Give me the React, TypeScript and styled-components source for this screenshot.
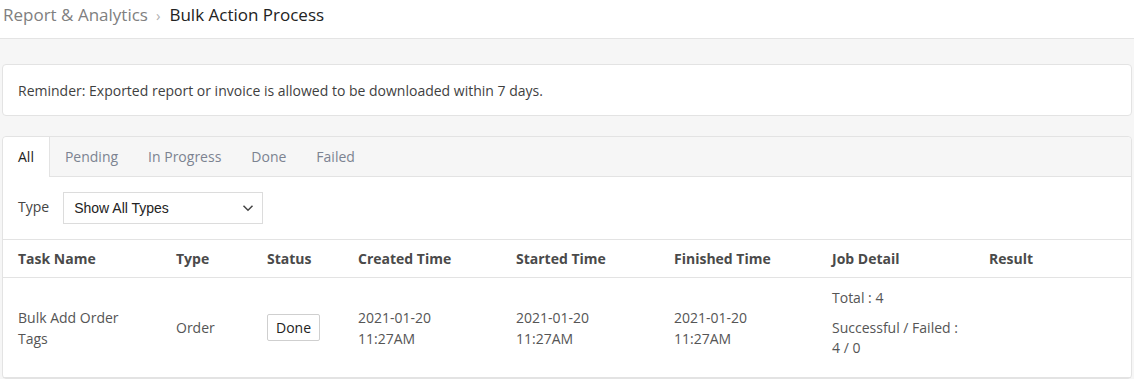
import styled, { createGlobalStyle } from 'styled-components'

const GlobalStyle = createGlobalStyle`
  html, body { margin: 0; padding: 0; background: #f6f6f6; }
  body { font-family: "Open Sans", "Liberation Sans", sans-serif; color: #555; }
  * { box-sizing: border-box; }
`

const Header = styled.header`
  height: 39px; background: #fff; border-bottom: 1px solid #e4e4e4;
  display: flex; align-items: center; padding: 0 3px 9px;
  font-size: 17px;
`

const Crumb = styled.span<{ current?: boolean }>`
  color: ${p => (p.current ? '#222' : '#808080')};
`

const Sep = styled.span`
  color: #b0b0b0; font-size: 15px; margin: 0 9px 0 8px;
`

const Body = styled.main`
  padding: 25px 2px 0;
  display: flex; flex-direction: column; gap: 20px;
`

const Panel = styled.section`
  background: #fff; border: 1px solid #e3e3e3; border-radius: 4px;
`

const Reminder = styled(Panel)`
  height: 52px; display: flex; align-items: center;
  padding: 0 15px; font-size: 14px; color: #3f3f3f;
`

const Tabs = styled.nav`
  display: flex; height: 40px; background: #f6f6f6;
  border-bottom: 1px solid #e3e3e3; border-radius: 4px 4px 0 0;
`

const Tab = styled.div<{ active?: boolean }>`
  display: flex; align-items: center; padding: 0 15px 1px;
  font-size: 14px; margin-bottom: -1px;
  color: ${p => (p.active ? '#222' : '#7c8391')};
  background: ${p => (p.active ? '#fff' : 'transparent')};
  border-right: ${p => (p.active ? '1px solid #e3e3e3' : 'none')};
  border-radius: ${p => (p.active ? '4px 0 0 0' : '0')};
`

const Filter = styled.div`
  display: flex; align-items: center; gap: 14px;
  padding: 15px;
  border-bottom: 1px solid #e3e3e3;
  font-size: 14px; color: #444;
`

const FilterLabel = styled.span`
  margin-top: -3px;
`

const Select = styled.div`
  width: 200px; height: 32px; border: 1px solid #dcdcdc;
  display: flex; align-items: center; justify-content: space-between;
  padding: 0 8px 0 10px;
  font-family: "Liberation Sans", Arial, sans-serif; font-size: 14px; color: #222;
`

const Table = styled.div`
  display: grid;
  grid-template-columns: 158px 91px 91px 158px 158px 158px 157px 1fr;
  padding-left: 15px;
`

const HeadCell = styled.div`
  height: 38px; display: flex; align-items: center;
  font-weight: 700; font-size: 14px; color: #4a4a4a;
  border-bottom: 1px solid #e3e3e3;
  margin-left: -15px; padding-left: 15px;
`

const Cell = styled.div`
  height: 100px; display: flex; flex-direction: column; justify-content: center;
  font-size: 14px; line-height: 21px; color: #555;
  border-bottom: 1px solid #e3e3e3;
  margin-left: -15px; padding-left: 15px; padding-right: 12px;
`

const StatusTag = styled.span`
  align-self: flex-start; border: 1px solid #cfcfcf; border-radius: 2px;
  padding: 2px 8px; line-height: 21px; color: #222; background: #fff;
`

const DetailLine = styled.p`
  margin: 0 0 10px; line-height: 20px;
`

const Chevron = () => (
  <svg width="12" height="8" viewBox="0 0 12 8" fill="none">
    <path d="M1.5 1.8 6 6.2l4.5-4.4" stroke="#444" strokeWidth="1.5" />
  </svg>
)

const heads = ['Task Name', 'Type', 'Status', 'Created Time', 'Started Time', 'Finished Time', 'Job Detail', 'Result']

export default function App() {
  return (
    <>
      <GlobalStyle />
      <Header>
        <Crumb>Report &amp; Analytics</Crumb>
        <Sep>›</Sep>
        <Crumb current>Bulk Action Process</Crumb>
      </Header>
      <Body>
        <Reminder>Reminder: Exported report or invoice is allowed to be downloaded within 7 days.</Reminder>
        <Panel>
          <Tabs>
            <Tab active>All</Tab>
            <Tab>Pending</Tab>
            <Tab>In Progress</Tab>
            <Tab>Done</Tab>
            <Tab>Failed</Tab>
          </Tabs>
          <Filter>
            <FilterLabel>Type</FilterLabel>
            <Select>
              Show All Types
              <Chevron />
            </Select>
          </Filter>
          <Table>
            {heads.map(h => <HeadCell key={h}>{h}</HeadCell>)}
            <Cell>Bulk Add Order<br />Tags</Cell>
            <Cell>Order</Cell>
            <Cell><StatusTag>Done</StatusTag></Cell>
            <Cell>2021-01-20<br />11:27AM</Cell>
            <Cell>2021-01-20<br />11:27AM</Cell>
            <Cell>2021-01-20<br />11:27AM</Cell>
            <Cell>
              <DetailLine>Total : 4</DetailLine>
              <DetailLine>Successful / Failed :<br />4 / 0</DetailLine>
            </Cell>
            <Cell />
          </Table>
        </Panel>
      </Body>
    </>
  )
}
